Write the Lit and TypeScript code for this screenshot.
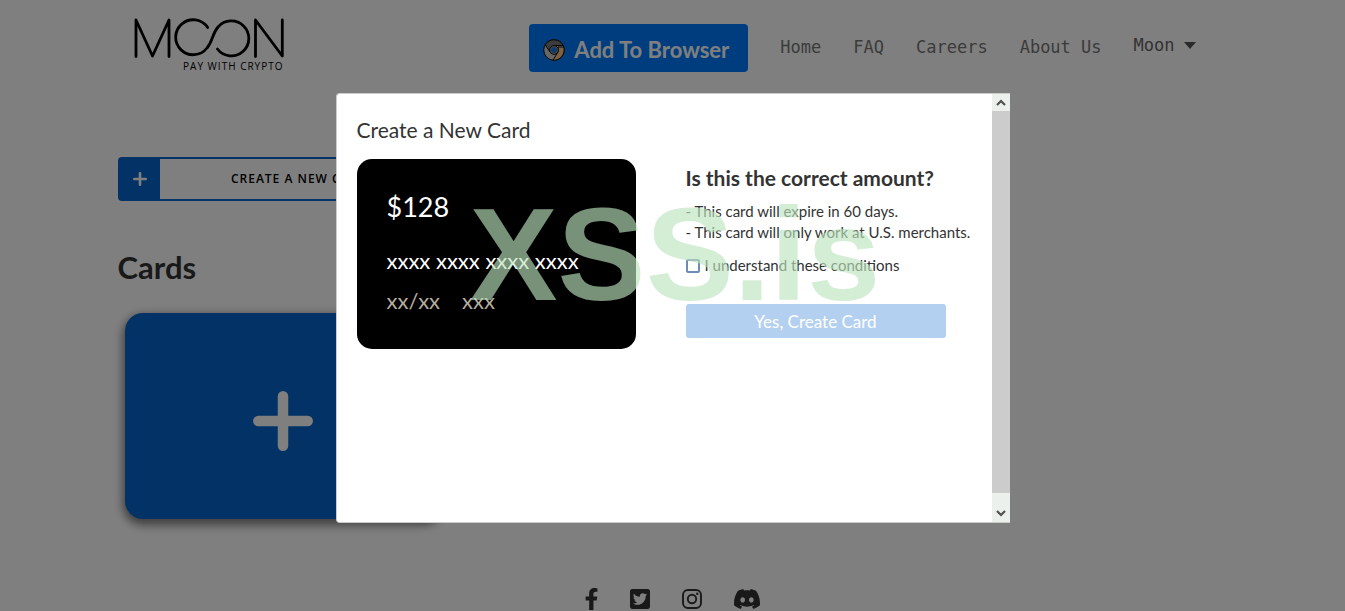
import { LitElement, html, css, svg } from "lit";
import { customElement, state } from "lit/decorators.js";

const NAV_LINKS = ["Home", "FAQ", "Careers", "About Us"];

const SOCIAL = [
  {
    name: "Facebook",
    width: 13,
    box: "22 0 274 512",
    shape: svg`<path d="M279.14 288l14.22-92.66h-88.91v-60.13c0-25.35 12.42-50.06 52.24-50.06h40.42V6.26S260.43 0 225.36 0c-73.22 0-121.08 44.38-121.08 124.72v70.62H22.89V288h81.39v224h100.17V288z"/>`,
  },
  {
    name: "Twitter",
    width: 20,
    box: "0 32 448 448",
    shape: svg`<path d="M400 32H48C21.5 32 0 53.5 0 80v352c0 26.5 21.5 48 48 48h352c26.5 0 48-21.5 48-48V80c0-26.5-21.5-48-48-48zm-48.9 158.8c.2 2.8.2 5.7.2 8.5 0 86.7-66 186.6-186.6 186.6-37.2 0-71.7-10.8-100.7-29.4 5.3.6 10.4.8 15.8.8 30.7 0 58.9-10.4 81.4-28-28.8-.6-53-19.5-61.3-45.5 10.1 1.5 19.2 1.5 29.6-1.2-30-6.1-52.5-32.5-52.5-64.4v-.8c8.7 4.9 18.9 7.9 29.6 8.3a65.447 65.447 0 0 1-29.2-54.6c0-12.2 3.2-23.4 8.9-33.1 32.3 39.8 80.8 65.8 135.2 68.6-9.3-44.5 24-80.6 64-80.6 18.9 0 35.9 7.9 47.9 20.7 14.8-2.8 29-8.3 41.6-15.8-4.9 15.2-15.2 28-28.8 36.1 13.2-1.4 26-5.1 37.8-10.2-8.9 13.1-20.1 24.7-32.9 34z"/>`,
  },
  {
    name: "Instagram",
    width: 20,
    box: "0 0 20 20",
    shape: svg`<rect x="1" y="1" width="18" height="18" rx="5" fill="none" stroke="currentColor" stroke-width="1.9"/><circle cx="10" cy="10" r="4.2" fill="none" stroke="currentColor" stroke-width="1.9"/><circle cx="15.3" cy="4.7" r="1.2"/>`,
  },
  {
    name: "Discord",
    width: 26,
    box: "0 2.7 24 18.6",
    shape: svg`<path d="M20.317 4.3698a19.7913 19.7913 0 00-4.8851-1.5152.0741.0741 0 00-.0785.0371c-.211.3753-.4447.8648-.6083 1.2495-1.8447-.2762-3.68-.2762-5.4868 0-.1636-.3933-.4058-.8742-.6177-1.2495a.077.077 0 00-.0785-.037 19.7363 19.7363 0 00-4.8852 1.515.0699.0699 0 00-.0321.0277C.5334 9.0458-.319 13.5799.0992 18.0578a.0824.0824 0 00.0312.0561c2.0528 1.5076 4.0413 2.4228 5.9929 3.0294a.0777.0777 0 00.0842-.0276c.4616-.6304.8731-1.2952 1.226-1.9942a.076.076 0 00-.0416-.1057c-.6528-.2476-1.2743-.5495-1.8722-.8923a.077.077 0 01-.0076-.1277c.1258-.0943.2517-.1923.3718-.2914a.0743.0743 0 01.0776-.0105c3.9278 1.7933 8.18 1.7933 12.0614 0a.0739.0739 0 01.0785.0095c.1202.099.246.1981.3728.2924a.077.077 0 01-.0066.1276 12.2986 12.2986 0 01-1.873.8914.0766.0766 0 00-.0407.1067c.3604.698.7719 1.3628 1.225 1.9932a.076.076 0 00.0842.0286c1.961-.6067 3.9495-1.5219 6.0023-3.0294a.077.077 0 00.0313-.0552c.5004-5.177-.8382-9.6739-3.5485-13.6604a.061.061 0 00-.0312-.0286zM8.02 15.3312c-1.1825 0-2.1569-1.0857-2.1569-2.419 0-1.3332.9555-2.4189 2.157-2.4189 1.2108 0 2.1757 1.0952 2.1568 2.419 0 1.3332-.9555 2.4189-2.1569 2.4189zm7.9748 0c-1.1825 0-2.1569-1.0857-2.1569-2.419 0-1.3332.9554-2.4189 2.1569-2.4189 1.2108 0 2.1757 1.0952 2.1568 2.419 0 1.3332-.946 2.4189-2.1568 2.4189Z"/>`,
  },
];

@customElement("app-root")
export class AppRoot extends LitElement {
  @state() private accepted = false;

  static styles = css`
    :host {
      display: block;
      position: relative;
      height: 100vh;
      overflow: hidden;
      background: #fff;
      color: #333;
      font-family: Lato, sans-serif;
    }
    * { box-sizing: border-box; }
    h1, h2, h3, p { margin: 0; }
    button { font: inherit; padding: 0; border: 0; cursor: pointer; }
    a { color: inherit; text-decoration: none; }
    svg { display: block; }

    .page {
      display: flex;
      flex-direction: column;
      max-width: 1110px;
      margin: 0 auto;
    }
    .header {
      display: flex;
      justify-content: space-between;
      align-items: flex-start;
      padding: 16px 32px 0 16px;
    }
    .logo { display: flex; flex-direction: column; color: #000; }
    .tagline {
      align-self: flex-end;
      font: 10px/16px "Open Sans", sans-serif;
      letter-spacing: 1px;
    }
    .nav {
      display: flex;
      align-items: center;
      gap: 32px;
      padding-top: 8px;
      font: 17px/20px "DejaVu Sans Mono", monospace;
      color: #777;
    }
    .link { padding-bottom: 2px; }
    .extension {
      display: flex;
      align-items: center;
      gap: 9px;
      height: 48px;
      padding: 3px 19px 0 14px;
      border-radius: 4px;
      background: #007bff;
      color: #fff;
      font: 700 22px/24px Lato, sans-serif;
    }
    .account {
      display: flex;
      align-items: center;
      gap: 9px;
      padding-bottom: 6px;
      background: none;
      color: #666;
    }
    .caret {
      border: 6px solid transparent;
      border-top: 7px solid #555;
      border-bottom: 0;
    }

    .create {
      display: flex;
      align-items: stretch;
      width: 318px;
      height: 44px;
      margin-top: 83px;
      border: 2px solid #0664cc;
      border-radius: 4px;
      background: #fff;
      color: #000;
      font: 600 12px/20px "Open Sans", sans-serif;
      letter-spacing: 1px;
    }
    .create-icon {
      display: grid;
      place-items: center;
      width: 40px;
      background: #0664cc;
    }
    .create-label { flex: 1; align-self: center; padding-left: 6px; text-align: center; }
    .heading { margin-top: 47px; font-size: 31px; line-height: 38px; font-weight: 700; }
    .new-card {
      display: grid;
      place-items: center;
      width: 316px;
      height: 206px;
      margin: 27px 0 0 7px;
      padding-top: 10px;
      border-radius: 18px;
      background: #0664cc;
      box-shadow: 0 4px 10px 2px rgba(0, 0, 0, 0.5);
    }
    .footer {
      display: flex;
      justify-content: center;
      align-items: center;
      gap: 32px;
      margin-top: 69px;
      color: #333;
    }
    .footer svg { fill: currentColor; }

    .backdrop {
      position: absolute;
      inset: 0;
      display: flex;
      justify-content: center;
      align-items: center;
      padding-top: 5px;
      background: rgba(0, 0, 0, 0.5);
    }
    .modal {
      display: flex;
      width: 50%;
      min-width: 674px;
      height: 430px;
      border: 1px solid #ccc;
      border-right: 0;
      border-radius: 4px 0 0 4px;
      background: #fff;
    }
    .content { flex: 1; padding: 22px 20px; }
    .title { font-size: 21px; line-height: 28px; font-weight: 400; }
    .columns { display: flex; gap: 50px; margin-top: 15px; }
    .preview {
      flex: none;
      width: 279px;
      height: 190px;
      padding: 28px 30px;
      border-radius: 15px;
      background: #000;
      color: #fff;
    }
    .amount { font-size: 27px; line-height: 40px; font-weight: 400; }
    .number { margin-top: 22px; font-size: 22px; line-height: 24px; white-space: nowrap; }
    .meta {
      display: flex;
      gap: 22px;
      margin-top: 16px;
      font-size: 22px;
      line-height: 24px;
      color: #b5ae9f;
    }
    .confirm { flex: none; display: flex; flex-direction: column; align-items: flex-start; }
    .question { margin: 5px 0 9px; font-size: 21px; line-height: 28px; font-weight: 700; }
    .note { font-size: 15px; line-height: 21px; }
    .agree {
      display: flex;
      align-items: center;
      gap: 5px;
      margin-top: 12px;
      font-size: 15px;
      line-height: 21px;
    }
    .agree input {
      appearance: none;
      width: 14px;
      height: 14px;
      margin: 0;
      border: 2px solid #6d8bb3;
      border-radius: 2px;
      background: #fff;
    }
    .agree input:checked { background: #0664cc; }
    .submit {
      width: 260px;
      height: 34px;
      margin-top: 28px;
      border-radius: 3px;
      background: #b4d0f1;
      color: #fff;
      font-size: 17px;
    }
    .scrollbar { display: flex; flex-direction: column; width: 18px; background: #ebf0ed; }
    .arrow { display: grid; place-items: center; height: 17px; background: #ebf0ed; }
    .thumb { flex: 1; margin-bottom: 12px; background: #ccc; }

    .watermark {
      position: absolute;
      top: 188px;
      left: 0;
      right: 0;
      padding-left: 5px;
      text-align: center;
      font: 700 132px/134px "Liberation Sans", sans-serif;
      color: rgba(187, 227, 190, 0.64);
      pointer-events: none;
    }
  `;

  private toggle(e: Event) {
    this.accepted = (e.target as HTMLInputElement).checked;
  }

  private renderHeader() {
    return html`
      <header class="header">
        <a class="logo" href="#" aria-label="Moon">
          <svg width="150" height="42" viewBox="0 -2 150 42" fill="none" stroke="currentColor"
            stroke-width="2.8" stroke-linecap="round" stroke-linejoin="round">
            <path d="M2 38.5V2L18.5 38L35 2V38.5" />
            <path d="M73.7 9.5A17.5 17.5 0 1 0 73 30C79 23 78 16 84 9A17.5 17.5 0 1 1 83.4 31" />
            <path d="M121.5 38.5V2L148.3 38V2" />
          </svg>
          <span class="tagline">PAY WITH CRYPTO</span>
        </a>
        <nav class="nav">
          <a class="extension" href="#">
            <svg width="22" height="22" viewBox="0 0 22 22">
              <circle cx="11" cy="11" r="10.3" fill="#ccc" stroke="#111" />
              <path d="M2.2 5.8A10.3 10.3 0 0 1 20.2 6.5H11L7 13Z" fill="#777" stroke="#111" />
              <path d="M15 8H20.7A10.3 10.3 0 0 1 10 21.2L15 13Z" fill="#ffc27a" stroke="#111" />
              <circle cx="11" cy="11" r="4.4" fill="#999" stroke="#111" />
              <circle cx="11" cy="11" r="3" fill="#1679e0" />
            </svg>
            Add To Browser
          </a>
          ${NAV_LINKS.map((label) => html`<a class="link" href="#">${label}</a>`)}
          <button class="account" aria-haspopup="true">Moon<span class="caret"></span></button>
        </nav>
      </header>
    `;
  }

  private renderModal() {
    return html`
      <div class="backdrop">
        <section class="modal" role="dialog" aria-modal="true" aria-labelledby="title">
          <div class="content">
            <h2 class="title" id="title">Create a New Card</h2>
            <div class="columns">
              <div class="preview">
                <p class="amount">$128</p>
                <p class="number">xxxx xxxx xxxx xxxx</p>
                <p class="meta"><span>xx/xx</span><span>xxx</span></p>
              </div>
              <div class="confirm">
                <h3 class="question">Is this the correct amount?</h3>
                <p class="note">- This card will expire in 60 days.</p>
                <p class="note">- This card will only work at U.S. merchants.</p>
                <label class="agree">
                  <input type="checkbox" .checked=${this.accepted} @change=${this.toggle} />
                  I understand these conditions
                </label>
                <button class="submit" ?disabled=${!this.accepted}>Yes, Create Card</button>
              </div>
            </div>
          </div>
          <div class="scrollbar">
            <button class="arrow" aria-label="Scroll up">
              <svg width="10" height="7" viewBox="0 0 10 7" fill="none" stroke="#505050" stroke-width="2.2"><path d="M1 6L5 2L9 6" /></svg>
            </button>
            <div class="thumb"></div>
            <button class="arrow" aria-label="Scroll down">
              <svg width="10" height="7" viewBox="0 0 10 7" fill="none" stroke="#505050" stroke-width="2.2"><path d="M1 1L5 5L9 1" /></svg>
            </button>
          </div>
        </section>
      </div>
    `;
  }

  render() {
    return html`
      <div class="page">
        ${this.renderHeader()}
        <main>
          <button class="create">
            <span class="create-icon">
              <svg width="14" height="14" viewBox="0 0 14 14" stroke="#fff" stroke-width="2.6" stroke-linecap="round"><path d="M7 1.3V12.7M1.3 7H12.7" /></svg>
            </span>
            <span class="create-label">CREATE A NEW CARD</span>
          </button>
          <h1 class="heading">Cards</h1>
          <button class="new-card" aria-label="Add card">
            <svg width="60" height="60" viewBox="0 0 60 60" stroke="#fff" stroke-width="10.5" stroke-linecap="round"><path d="M30 5.3V54.7M5.3 30H54.7" /></svg>
          </button>
        </main>
        <footer class="footer">
          ${SOCIAL.map(
            (s) => html`<a href="#" aria-label=${s.name}>
              <svg width=${s.width} height="22" viewBox=${s.box}>${s.shape}</svg>
            </a>`
          )}
        </footer>
      </div>
      ${this.renderModal()}
      <div class="watermark">XSS.is</div>
    `;
  }
}
